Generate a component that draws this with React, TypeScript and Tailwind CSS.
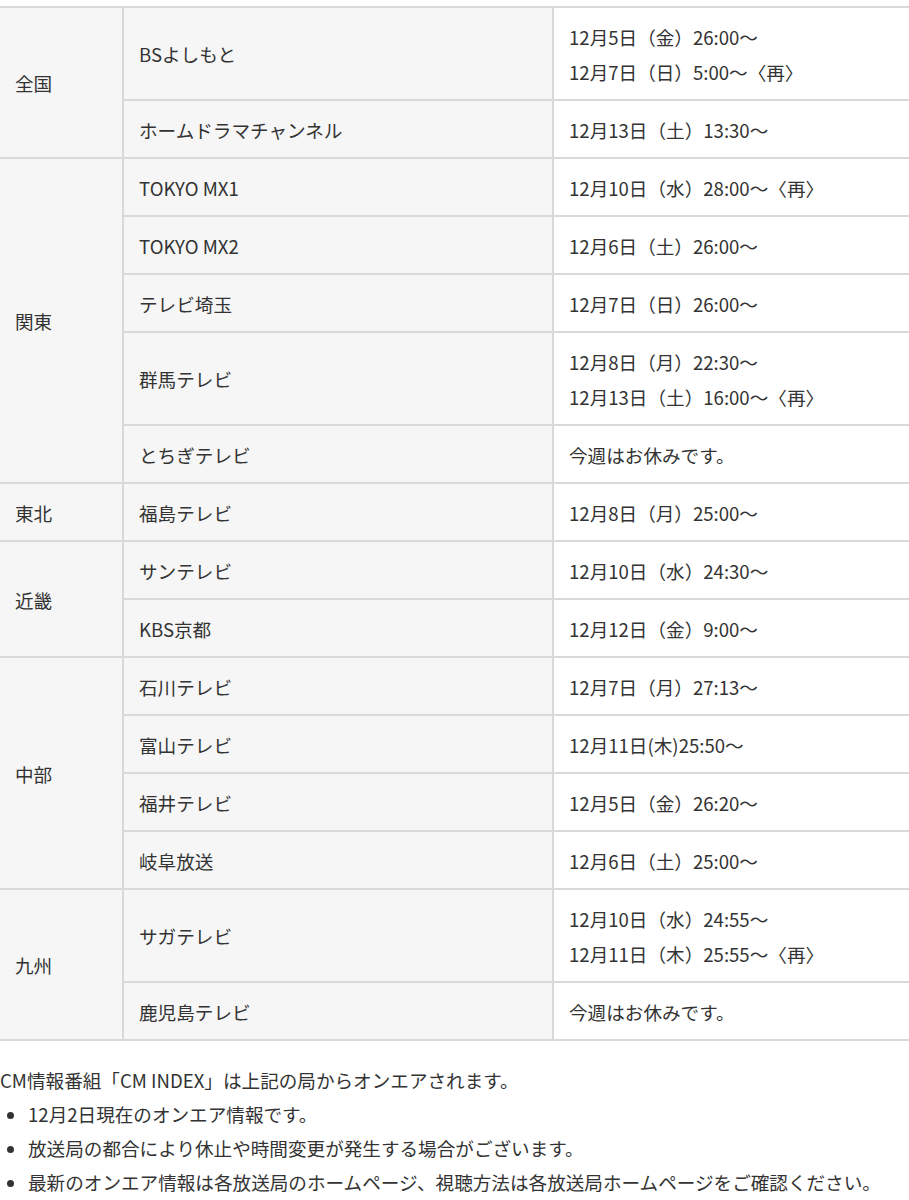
type Station = { name: string; times: string[] };
type Region = { region: string; stations: Station[] };

const schedule: Region[] = [
  {
    region: "全国",
    stations: [
      { name: "BSよしもと", times: ["12月5日（金）26:00〜", "12月7日（日）5:00〜〈再〉"] },
      { name: "ホームドラマチャンネル", times: ["12月13日（土）13:30〜"] },
    ],
  },
  {
    region: "関東",
    stations: [
      { name: "TOKYO MX1", times: ["12月10日（水）28:00〜〈再〉"] },
      { name: "TOKYO MX2", times: ["12月6日（土）26:00〜"] },
      { name: "テレビ埼玉", times: ["12月7日（日）26:00〜"] },
      { name: "群馬テレビ", times: ["12月8日（月）22:30〜", "12月13日（土）16:00〜〈再〉"] },
      { name: "とちぎテレビ", times: ["今週はお休みです。"] },
    ],
  },
  {
    region: "東北",
    stations: [{ name: "福島テレビ", times: ["12月8日（月）25:00〜"] }],
  },
  {
    region: "近畿",
    stations: [
      { name: "サンテレビ", times: ["12月10日（水）24:30〜"] },
      { name: "KBS京都", times: ["12月12日（金）9:00〜"] },
    ],
  },
  {
    region: "中部",
    stations: [
      { name: "石川テレビ", times: ["12月7日（月）27:13〜"] },
      { name: "富山テレビ", times: ["12月11日(木)25:50〜"] },
      { name: "福井テレビ", times: ["12月5日（金）26:20〜"] },
      { name: "岐阜放送", times: ["12月6日（土）25:00〜"] },
    ],
  },
  {
    region: "九州",
    stations: [
      { name: "サガテレビ", times: ["12月10日（水）24:55〜", "12月11日（木）25:55〜〈再〉"] },
      { name: "鹿児島テレビ", times: ["今週はお休みです。"] },
    ],
  },
];

const notes = [
  "12月2日現在のオンエア情報です。",
  "放送局の都合により休止や時間変更が発生する場合がございます。",
  "最新のオンエア情報は各放送局のホームページ、視聴方法は各放送局ホームページをご確認ください。",
];

const cell = "border-2 border-[#d9d9d9] py-[10.5px] align-middle";

export default function App() {
  return (
    <div
      className="min-h-screen bg-white pt-[6px] text-[18.6px] leading-[35px] text-[#333]"
      style={{ fontFamily: '"Noto Sans CJK JP", "Noto Sans", sans-serif' }}
    >
      {/* On-air table */}
      <table className="w-full table-fixed border-collapse">
        <colgroup>
          <col className="w-[123px]" />
          <col className="w-[430px]" />
          <col />
        </colgroup>
        <tbody>
          {schedule.map((r) =>
            r.stations.map((s, i) => (
              <tr key={r.region + s.name}>
                {i === 0 && (
                  <th
                    rowSpan={r.stations.length}
                    className={`${cell} border-l-0 bg-[#f6f6f6] pl-[15px] text-left font-normal`}
                  >
                    {r.region}
                  </th>
                )}
                <td className={`${cell} bg-[#f6f6f6] pl-[15px]`}>{s.name}</td>
                <td className={`${cell} border-r-0 bg-white pl-[15px]`}>
                  {s.times.map((t) => (
                    <div key={t}>{t}</div>
                  ))}
                </td>
              </tr>
            ))
          )}
        </tbody>
      </table>

      {/* Notes */}
      <div className="mt-[22px] leading-[34px]">
        <p>CM情報番組「CM INDEX」は上記の局からオンエアされます。</p>
        <ul className="list-disc pl-[28px] whitespace-nowrap">
          {notes.map((n) => (
            <li key={n}>{n}</li>
          ))}
        </ul>
      </div>
    </div>
  );
}
